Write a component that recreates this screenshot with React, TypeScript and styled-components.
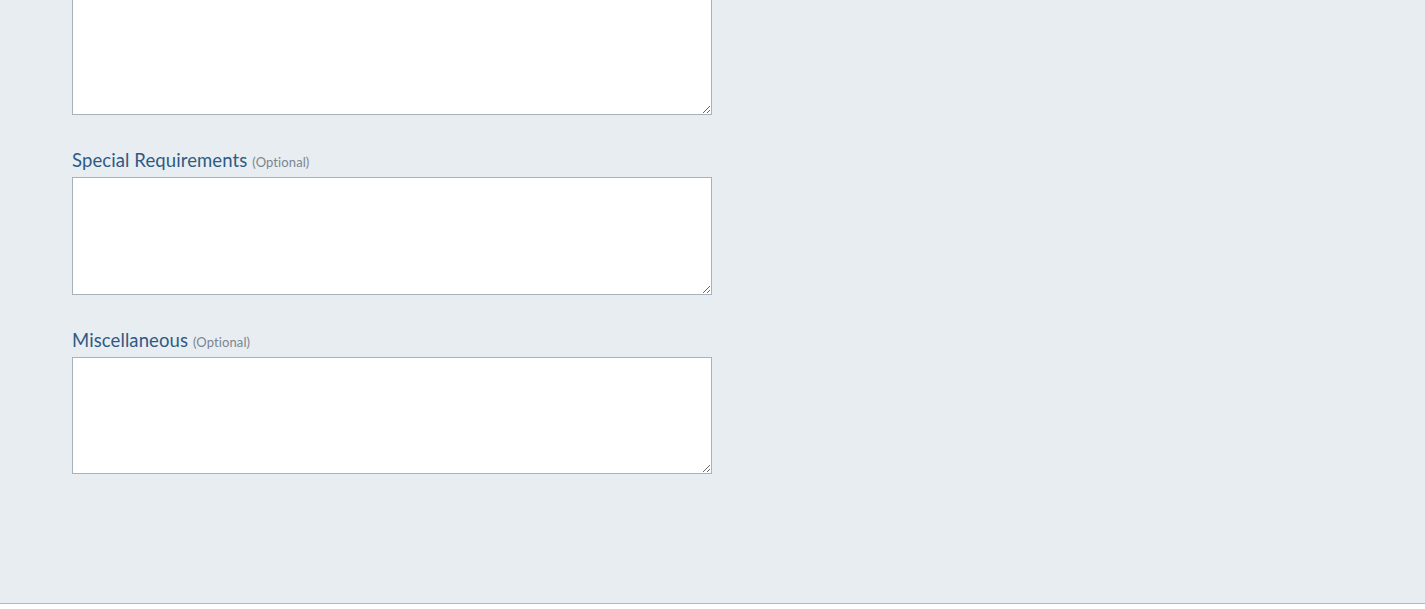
import styled, { createGlobalStyle } from "styled-components";

const GlobalStyle = createGlobalStyle`
  html, body {
    margin: 0;
    padding: 0;
    background: #ffffff;
    font-family: "Lato", "Noto Sans", sans-serif;
  }
`;

const Page = styled.div`
  background-color: #e8edf1;
  border-bottom: 1px solid #b4b8bc;
  height: 603px;
  overflow: hidden;
`;

const Form = styled.div`
  width: 640px;
  padding-left: 72px;
  margin-top: -60px;
  display: flex;
  flex-direction: column;
`;

const Field = styled.div`
  display: flex;
  flex-direction: column;
  margin-bottom: 35px;
`;

const Label = styled.label`
  display: flex;
  align-items: baseline;
  gap: 5px;
  height: 22px;
  margin-bottom: 5px;
  font-size: 18.5px;
  line-height: 21px;
  letter-spacing: 0.1px;
  color: #2f5a84;
`;

const Optional = styled.span`
  font-size: 13px;
  color: #7b858f;
`;

const TextArea = styled.textarea<{ $h?: number }>`
  box-sizing: border-box;
  width: 640px;
  height: ${(p) => p.$h ?? 118}px;
  margin: 0;
  border: 1px solid #a8b2bd;
  border-radius: 0;
  background: #ffffff;
  font-family: "Lato", sans-serif;
  font-size: 15px;
  resize: vertical;
  outline: none;
`;

export default function App() {
  return (
    <>
      <GlobalStyle />
      <Page>
        <Form>
          <Field>
            <TextArea $h={175} />
          </Field>
          <Field>
            <Label>
              Special Requirements <Optional>(Optional)</Optional>
            </Label>
            <TextArea />
          </Field>
          <Field>
            <Label>
              Miscellaneous <Optional>(Optional)</Optional>
            </Label>
            <TextArea $h={117} />
          </Field>
        </Form>
      </Page>
    </>
  );
}
